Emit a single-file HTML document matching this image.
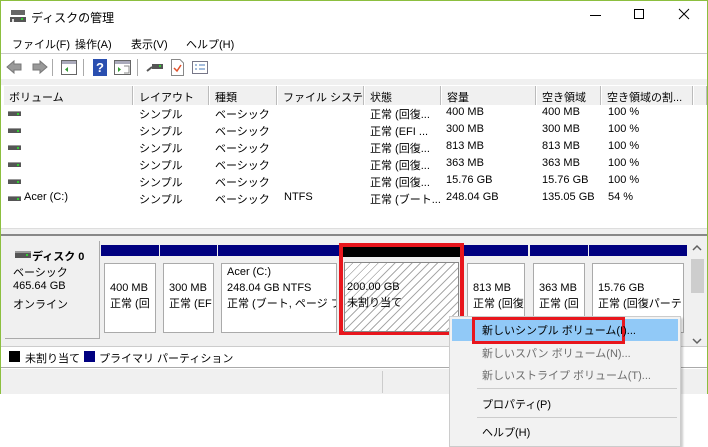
<!DOCTYPE html>
<html><head><meta charset="utf-8"><style>
*{margin:0;padding:0;box-sizing:border-box}
body{width:708px;height:447px;background:#fff;font-family:"Liberation Sans","Noto Sans CJK JP",sans-serif;font-size:11px;color:#000;position:relative;overflow:hidden}
.a{position:absolute;white-space:nowrap}
.win{position:absolute;left:0;top:0;width:708px;height:394px;border:1px solid #8cbf3f;background:#fff}
.hd{position:absolute;top:85px;height:19px;border-right:1px solid #bbb;border-left:1px solid #fff;padding:3px 0 0 5px;background:#f0f0f0;overflow:hidden;white-space:nowrap}
.row{position:absolute;left:0;height:17px;width:690px}
.row span{position:absolute;top:0;overflow:hidden;white-space:nowrap}
.dr{display:inline-block;width:13px;height:5px;background:#555;border-top:1px solid #999;position:absolute;left:7px;top:5px}
.dr:after{content:"";position:absolute;right:2px;top:1px;width:2px;height:2px;background:#3c3}
.part{position:absolute;top:244px;height:90px}
.part .bar{height:11px;background:#000080}
.part .bx{position:absolute;top:18px;left:3px;right:3px;bottom:2px;background:#fff;border:1px solid #aaa;padding:16px 0 0 5px;line-height:16px;overflow:hidden;white-space:nowrap}
.mi{position:absolute;left:482px;white-space:nowrap}
</style></head><body>
<div class="win">
<svg class="a" style="left:9px;top:8px" width="16" height="14"><rect x="1" y="1" width="14" height="5" fill="#666"/><rect x="0" y="8" width="16" height="5" fill="#555"/><rect x="11" y="9" width="2" height="2" fill="#3c3"/><rect x="2" y="10" width="2" height="3" fill="#ddd"/></svg>
<div class="a" style="left:30px;top:8px;font-size:12px">ディスクの管理</div>
<div class="a" style="left:589px;top:14px;width:11px;height:1px;background:#000"></div>
<div class="a" style="left:633px;top:8px;width:10px;height:10px;border:1px solid #000"></div>
<svg class="a" style="left:677px;top:7px" width="12" height="12"><path d="M1 1L11 11M11 1L1 11" stroke="#000" stroke-width="1"/></svg>
<div class="a" style="left:11px;top:35px">ファイル(F)</div>
<div class="a" style="left:74px;top:35px">操作(A)</div>
<div class="a" style="left:130px;top:35px">表示(V)</div>
<div class="a" style="left:185px;top:35px">ヘルプ(H)</div>
<div class="a" style="left:0;top:52px;width:706px;height:1px;background:#ccc"></div>
<svg class="a" style="left:5px;top:58px" width="42" height="16"><path d="M1 8L8 2V5H15V11H8V14Z" fill="#999" stroke="#777"/><path d="M41 8L34 2V5H27V11H34V14Z" fill="#999" stroke="#777"/></svg>
<div class="a" style="left:51px;top:58px;width:1px;height:17px;background:#aaa"></div>
<svg class="a" style="left:60px;top:59px" width="16" height="15"><rect x=".5" y=".5" width="15" height="14" fill="#fff" stroke="#666"/><rect x="1" y="1" width="14" height="3" fill="#aab"/><path d="M7 7L4 9.5L7 12Z" fill="#393"/></svg>
<div class="a" style="left:82px;top:58px;width:1px;height:17px;background:#aaa"></div>
<div class="a" style="left:92px;top:58px;width:14px;height:17px;background:#2a4fb0;color:#fff;font-weight:bold;font-size:13px;text-align:center;line-height:17px">?</div>
<svg class="a" style="left:113px;top:59px" width="17" height="15"><rect x=".5" y=".5" width="16" height="14" fill="#fff" stroke="#666"/><rect x="1" y="1" width="15" height="3" fill="#aab"/><path d="M4 7L7 9.5L4 12Z" fill="#393"/><path d="M10 6H15V13H10" fill="none" stroke="#888"/></svg>
<div class="a" style="left:136px;top:58px;width:1px;height:17px;background:#aaa"></div>
<svg class="a" style="left:145px;top:61px" width="18" height="12"><path d="M1 9L6 5" stroke="#555" stroke-width="2"/><rect x="6" y="2" width="11" height="5" fill="#555"/><rect x="13" y="3" width="2" height="2" fill="#3c3"/></svg>
<svg class="a" style="left:170px;top:58px" width="13" height="17"><path d="M.5 .5H9L12.5 4V16.5H.5Z" fill="#fff" stroke="#888"/><path d="M3 9L6 12L10 6" fill="none" stroke="#e0502a" stroke-width="1.5"/></svg>
<svg class="a" style="left:191px;top:60px" width="16" height="13"><rect x=".5" y=".5" width="15" height="12" fill="#fff" stroke="#778"/><path d="M3 4H5M7 4H13M3 8H5M7 8H13" stroke="#4a7ab8"/></svg>
<div class="a" style="left:0;top:78px;width:706px;height:6px;background:#f0f0f0"></div>
<div class="hd" style="left:2px;width:130px">ボリューム</div>
<div class="hd" style="left:132px;width:76px">レイアウト</div>
<div class="hd" style="left:208px;width:68px">種類</div>
<div class="hd" style="left:276px;width:87px">ファイル システム</div>
<div class="hd" style="left:363px;width:77px">状態</div>
<div class="hd" style="left:440px;width:95px">容量</div>
<div class="hd" style="left:535px;width:65px">空き領域</div>
<div class="hd" style="left:600px;width:92px">空き領域の割...</div>
<div class="hd" style="left:692px;width:14px"></div>
<div class="row" style="top:105px"><i class="dr"></i><span style="left:138px">シンプル</span><span style="left:214px">ベーシック</span><span style="left:369px;width:70px">正常 (回復...</span><span style="left:445px">400 MB</span><span style="left:541px">400 MB</span><span style="left:607px">100 %</span></div>
<div class="row" style="top:122px"><i class="dr"></i><span style="left:138px">シンプル</span><span style="left:214px">ベーシック</span><span style="left:369px;width:70px">正常 (EFI ...</span><span style="left:445px">300 MB</span><span style="left:541px">300 MB</span><span style="left:607px">100 %</span></div>
<div class="row" style="top:139px"><i class="dr"></i><span style="left:138px">シンプル</span><span style="left:214px">ベーシック</span><span style="left:369px;width:70px">正常 (回復...</span><span style="left:445px">813 MB</span><span style="left:541px">813 MB</span><span style="left:607px">100 %</span></div>
<div class="row" style="top:156px"><i class="dr"></i><span style="left:138px">シンプル</span><span style="left:214px">ベーシック</span><span style="left:369px;width:70px">正常 (回復...</span><span style="left:445px">363 MB</span><span style="left:541px">363 MB</span><span style="left:607px">100 %</span></div>
<div class="row" style="top:173px"><i class="dr"></i><span style="left:138px">シンプル</span><span style="left:214px">ベーシック</span><span style="left:369px;width:70px">正常 (回復...</span><span style="left:445px">15.76 GB</span><span style="left:541px">15.76 GB</span><span style="left:607px">100 %</span></div>
<div class="row" style="top:190px"><i class="dr"></i><span style="left:23px">Acer (C:)</span><span style="left:138px">シンプル</span><span style="left:214px">ベーシック</span><span style="left:283px">NTFS</span><span style="left:369px;width:70px">正常 (ブート...</span><span style="left:445px">248.04 GB</span><span style="left:541px">135.05 GB</span><span style="left:607px">54 %</span></div>
<div class="a" style="left:0;top:227px;width:706px;height:6px;background:#f0f0f0;border-top:1px solid #ddd"></div>
<div class="a" style="left:0;top:233px;width:706px;height:2px;background:#888"></div>
<div class="a" style="left:0;top:235px;width:706px;height:132px;background:#f0f0f0"></div>
<div class="a" style="left:4px;top:240px;width:95px;height:98px;background:#f0f0f0;border-right:1px solid #aaa;border-bottom:1px solid #aaa"></div>
<svg class="a" style="left:14px;top:250px" width="16" height="8"><rect x="0" y="0" width="16" height="2" fill="#999"/><rect x="0" y="2" width="16" height="5" fill="#555"/><rect x="11" y="3" width="2" height="2" fill="#3c3"/></svg>
<div class="a" style="left:31px;top:247px;font-weight:bold">ディスク 0</div>
<div class="a" style="left:12px;top:263px">ベーシック</div>
<div class="a" style="left:12px;top:279px">465.64 GB</div>
<div class="a" style="left:12px;top:295px">オンライン</div>
<div class="part" style="left:100px;width:58px"><div class="bar"></div><div class="bx">400 MB<br>正常 (回</div></div>
<div class="part" style="left:159px;width:57px"><div class="bar"></div><div class="bx">300 MB<br>正常 (EF</div></div>
<div class="part" style="left:217px;width:122px"><div class="bar"></div><div class="bx" style="padding-top:0">Acer (C:)<br>248.04 GB NTFS<br>正常 (ブート, ページ ファ</div></div>
<div class="part" style="left:463px;width:64px"><div class="bar"></div><div class="bx">813 MB<br>正常 (回復</div></div>
<div class="part" style="left:529px;width:58px"><div class="bar"></div><div class="bx">363 MB<br>正常 (回</div></div>
<div class="part" style="left:588px;width:98px"><div class="bar"></div><div class="bx">15.76 GB<br>正常 (回復パーテ･</div></div>
<div class="a" style="left:338px;top:242px;width:125px;height:92px;border:4px solid #e8161d"></div>
<div class="a" style="left:342px;top:246px;width:117px;height:10px;background:#000"></div>
<div class="a" style="left:343px;top:261px;width:115px;height:70px;border:1px solid #888;background:repeating-linear-gradient(135deg,#fff 0,#fff 5px,#aaa 5px,#aaa 6px);padding:16px 0 0 2px;line-height:16px">200.00 GB<br>未割り当て</div>
<div class="a" style="left:688px;top:238px;width:17px;height:107px;background:#f0f0f0"></div>
<div class="a" style="left:690px;top:258px;width:13px;height:34px;background:#cdcdcd"></div>
<svg class="a" style="left:691px;top:243px" width="10" height="8"><path d="M1 6L5 2L9 6" fill="none" stroke="#606060" stroke-width="1.5"/></svg>
<svg class="a" style="left:691px;top:336px" width="10" height="8"><path d="M1 2L5 6L9 2" fill="none" stroke="#606060" stroke-width="1.5"/></svg>
<div class="a" style="left:0;top:345px;width:706px;height:1px;background:#ccc"></div>
<div class="a" style="left:0;top:346px;width:706px;height:21px;background:#fff;border-bottom:1px solid #aaa"></div>
<div class="a" style="left:8px;top:350px;width:11px;height:11px;background:#000"></div>
<div class="a" style="left:24px;top:349px">未割り当て</div>
<div class="a" style="left:83px;top:350px;width:11px;height:11px;background:#000080"></div>
<div class="a" style="left:98px;top:349px">プライマリ パーティション</div>
<div class="a" style="left:0;top:368px;width:706px;height:25px;background:#f0f0f0"></div>
<div class="a" style="left:381px;top:370px;width:1px;height:22px;background:#ccc"></div>
</div>
<div class="a" style="left:449px;top:316px;width:232px;height:131px;background:#f2f2f2;border:1px solid #ccc;box-shadow:2px 2px 2px rgba(0,0,0,.2)"></div>
<div class="a" style="left:452px;top:319px;width:226px;height:22px;background:#91c9f7"></div>
<div class="a" style="left:472px;top:317px;width:153px;height:27px;border:3px solid #e8161d"></div>
<div class="mi" style="top:322px">新しいシンプル ボリューム(I)...</div>
<div class="mi" style="top:345px;color:#6d6d6d">新しいスパン ボリューム(N)...</div>
<div class="mi" style="top:367px;color:#6d6d6d">新しいストライプ ボリューム(T)...</div>
<div class="a" style="left:477px;top:388px;width:200px;height:1px;background:#ccc"></div>
<div class="mi" style="top:396px">プロパティ(P)</div>
<div class="a" style="left:477px;top:417px;width:200px;height:1px;background:#ccc"></div>
<div class="mi" style="top:424px">ヘルプ(H)</div>
</body></html>
